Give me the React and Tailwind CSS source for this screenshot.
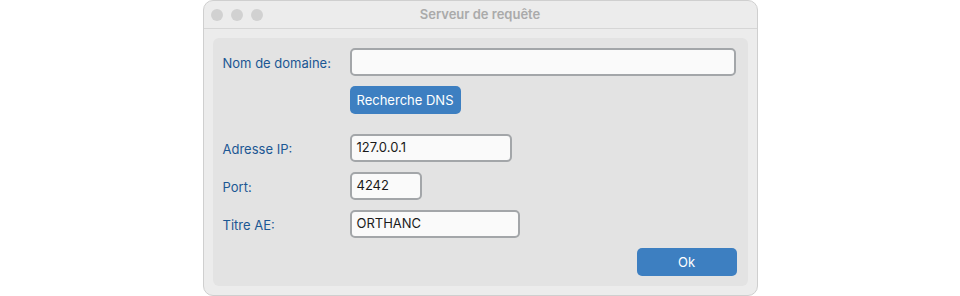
export default function App() {
  const font = { fontFamily: '"Inter", "Liberation Sans", sans-serif' };
  return (
    <div className="w-[960px] h-[296px] bg-white flex justify-center" style={font}>
      <div className="w-[555px] h-[296px] bg-[#ececec] border border-[#cfcfcf] rounded-[10px] flex flex-col overflow-hidden">
        <div className="h-[28px] shrink-0 border-b border-[#d6d6d6] flex items-center relative">
          <div className="flex gap-[8px] pl-[7px]">
            <span className="w-[12px] h-[12px] rounded-full bg-[#d1d1d1]" />
            <span className="w-[12px] h-[12px] rounded-full bg-[#d1d1d1]" />
            <span className="w-[12px] h-[12px] rounded-full bg-[#d1d1d1]" />
          </div>
          <div className="absolute inset-0 flex items-center justify-center text-[13px] font-semibold text-[#aaaaaa]">
            Serveur de requête
          </div>
        </div>
        <div className="flex-1 px-[9px] pt-[9px] pb-[9px]">
          <div className="h-full bg-[#e3e3e3] rounded-[6px] pl-[10px] pr-[10px] pt-[10px] flex flex-col text-[13px]">
            <div className="flex items-center h-[28px]">
              <div className="w-[127px] pt-[3px] text-[#1b5793]">Nom de domaine:</div>
              <div className="w-[386px] h-[28px] bg-[#fafafa] border-2 border-[#a3a6a9] rounded-[5px]" />
            </div>
            <div className="flex mt-[10px] pl-[127px]">
              <button className="h-[28px] px-[7px] pt-[1px] bg-[#3d7fc1] text-white rounded-[5px] text-[13px]">
                Recherche DNS
              </button>
            </div>
            <div className="flex items-center h-[28px] mt-[20px]">
              <div className="w-[127px] pt-[3px] text-[#1b5793]">Adresse IP:</div>
              <div className="w-[162px] h-[28px] bg-[#fafafa] border-2 border-[#a3a6a9] rounded-[5px] flex items-center px-[5px] text-[#1a1a1a]">
                127.0.0.1
              </div>
            </div>
            <div className="flex items-center h-[28px] mt-[10px]">
              <div className="w-[127px] pt-[3px] text-[#1b5793]">Port:</div>
              <div className="w-[72px] h-[28px] bg-[#fafafa] border-2 border-[#a3a6a9] rounded-[5px] flex items-center px-[5px] text-[#1a1a1a]">
                4242
              </div>
            </div>
            <div className="flex items-center h-[28px] mt-[10px]">
              <div className="w-[127px] pt-[3px] text-[#1b5793]">Titre AE:</div>
              <div className="w-[170px] h-[28px] bg-[#fafafa] border-2 border-[#a3a6a9] rounded-[5px] flex items-center px-[5px] text-[#1a1a1a]">
                ORTHANC
              </div>
            </div>
            <div className="flex justify-end mt-[10px] pr-[1px]">
              <button className="w-[100px] h-[28px] pt-[1px] bg-[#3d7fc1] text-white rounded-[5px] text-[13px]">
                Ok
              </button>
            </div>
          </div>
        </div>
      </div>
    </div>
  );
}
